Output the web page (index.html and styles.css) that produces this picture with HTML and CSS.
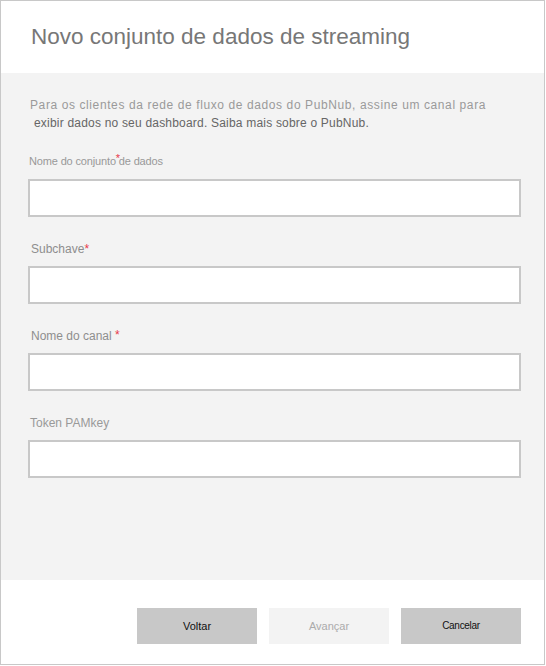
FILE: index.html
```html
<!DOCTYPE html>
<html lang="pt">
<head>
<meta charset="utf-8">
<title>Novo conjunto de dados de streaming</title>
<link rel="stylesheet" href="styles.css">
</head>
<body>
<div class="dialog">
  <header class="dialog-header">
    <h1 class="title">Novo conjunto de dados de streaming</h1>
  </header>
  <main class="dialog-body">
    <div class="desc">
      <div class="desc-line1">Para os clientes da rede de fluxo de dados do PubNub, assine um canal para</div>
      <div class="desc-line2">exibir dados no seu dashboard. Saiba mais sobre o PubNub.</div>
    </div>
    <div class="field field-first">
      <label class="label label-small">Nome do conjunto <span class="star star-over">*</span>de dados</label>
      <div class="input"></div>
    </div>
    <div class="field">
      <label class="label label-indent">Subchave<span class="star">*</span></label>
      <div class="input"></div>
    </div>
    <div class="field">
      <label class="label label-indent">Nome do canal <span class="star star-up">*</span></label>
      <div class="input"></div>
    </div>
    <div class="field">
      <label class="label label-token">Token PAMkey</label>
      <div class="input"></div>
    </div>
  </main>
  <footer class="dialog-footer">
    <button class="btn">Voltar</button>
    <button class="btn btn-disabled">Avançar</button>
    <button class="btn btn-small">Cancelar</button>
  </footer>
</div>
</body>
</html>
```

FILE: styles.css
```css
html, body {
  margin: 0;
  padding: 0;
  background: #ffffff;
}

body {
  font-family: "Liberation Sans", Arial, sans-serif;
}

.dialog {
  width: 545px;
  height: 665px;
  box-sizing: border-box;
  border: 1px solid #c8c8c8;
  display: flex;
  flex-direction: column;
  background: #ffffff;
}

.dialog-header {
  height: 72px;
  box-sizing: border-box;
  padding: 23px 0 0 30px;
  background: #ffffff;
}

.title {
  margin: 0;
  font-size: 22.5px;
  line-height: 26px;
  font-weight: normal;
  color: #777777;
}

.dialog-body {
  height: 507px;
  box-sizing: border-box;
  background: #f3f3f3;
  padding: 23px 23px 0 27px;
}

.desc {
  font-size: 12px;
  line-height: 18px;
  margin-left: 2px;
  margin-bottom: 22px;
}

.desc-line1 {
  color: #9a9a9a;
  letter-spacing: 0.6px;
  white-space: nowrap;
}

.desc-line2 {
  color: #666666;
  letter-spacing: 0.2px;
  padding-left: 4px;
  white-space: nowrap;
}

.field {
  display: flex;
  flex-direction: column;
  margin-top: 25px;
}

.field-first {
  margin-top: 0;
}

.label {
  font-size: 12px;
  line-height: 15px;
  color: #8e8e8e;
  margin-bottom: 9px;
  white-space: nowrap;
}

.label-small {
  font-size: 11px;
  line-height: 14px;
  letter-spacing: -0.15px;
  margin-bottom: 11px;
  margin-left: 1px;
  color: #999999;
}

.label-indent {
  margin-left: 3px;
}

.label-token {
  margin-left: 2px;
  color: #999999;
}

.star {
  color: #e8394a;
}

.star-over {
  display: inline-block;
  width: 0;
  position: relative;
  left: -3px;
  top: -3px;
}

.star-up {
  position: relative;
  top: -1px;
}

.input {
  height: 38px;
  box-sizing: border-box;
  border: 2px solid #c8c8c8;
  background: #ffffff;
}

.dialog-footer {
  flex: 1;
  display: flex;
  justify-content: flex-end;
  align-items: flex-start;
  gap: 12px;
  padding: 28px 23px 0 0;
  background: #ffffff;
}

.btn {
  width: 120px;
  height: 36px;
  border: none;
  margin: 0;
  padding: 0;
  background: #c8c8c8;
  color: #111111;
  font-family: "Liberation Sans", Arial, sans-serif;
  font-size: 11px;
  line-height: 36px;
}

.btn-disabled {
  background: #f3f3f3;
  color: #ababab;
}

.btn-small {
  font-size: 10px;
  letter-spacing: -0.3px;
}
```
